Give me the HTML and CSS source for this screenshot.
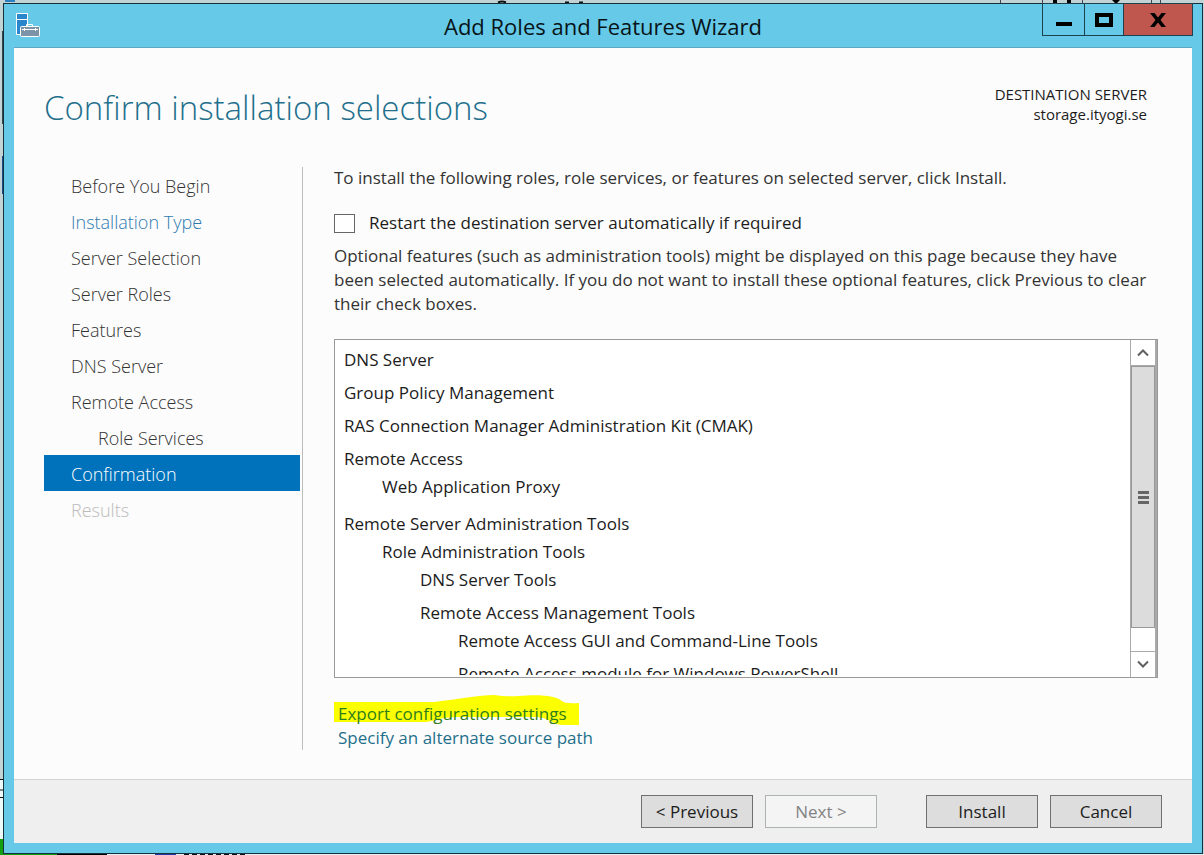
FILE: index.html
```
<!DOCTYPE html>
<html lang="en">
<head>
<meta charset="utf-8">
<title>Add Roles and Features Wizard</title>
<link rel="stylesheet" href="styles.css">
</head>
<body>
<svg class="backdrop" viewBox="0 0 1204 855" preserveAspectRatio="none" aria-hidden="true">
  <rect width="1204" height="855" fill="#c3d3d5"/>
  <rect x="5" width="10" height="2" fill="#2a80c0"/>
  <path d="M498 2.500q4-2 8 0M565 2.500h4M579 2.500h4" stroke="#111" fill="none" stroke-width="2"/>
  <path d="M1000.500 0v3M1042.500 0v3M1082.500 0v3M1151.500 0v3M1160.500 0v3" stroke="#445" />
  <path d="M1053 0h4v3h-4zM1067 0h4v3h-4zM1112 0h8l-3 3h-2z" fill="#000"/>
  <path d="M2.500 31v93" stroke="#33474a"/>
  <path d="M2.500 156v38" stroke="#1a4a8a"/>
  <path d="M0 779h3v61h-3z" fill="#eefafa"/>
  <path d="M0 779.500h3M0 790h3M0 797.500h3" stroke="#111"/>
  <path d="M0 839h3v16h-3zM3 854h54v1h-54z" fill="#12a012"/>
  <path d="M57 854h50v1h-50z" fill="#000"/>
  <path d="M107 854h48v1h-48zM176 854h1028v1h-1028z" fill="#e8eef5"/>
  <path d="M155 854h21v1h-21z" fill="#2438a8"/>
  <path d="M184 854.500h62" stroke="#111" stroke-dasharray="5 3"/>
</svg>
<div class="window">
  <header class="titlebar">
    <svg class="app-icon" width="24" height="25" viewBox="0 0 24 25" aria-hidden="true">
      <path d="M.5.5h11v21H.500z" fill="#2a86cc" stroke="#fff"/>
      <path d="M1 6.500h10" stroke="#fff"/>
      <path d="M10.500 13v-1.500h6V13" fill="none" stroke="#fff"/>
      <rect x="4.500" y="13.500" width="19" height="10" rx="1" fill="#7c93a8" stroke="#fff"/>
      <path d="M6 16.500h16M8.500 15v3M19.500 15v3" stroke="#fff"/>
    </svg>
    <span class="title">Add Roles and Features Wizard</span>
    <div class="caption-buttons">
      <button class="caption minimize" aria-label="Minimize"><svg width="16" height="16" viewBox="0 0 16 16"><path d="M0 10h16v4H0z"/></svg></button>
      <button class="caption maximize" aria-label="Maximize"><svg width="18" height="14" viewBox="0 0 18 14"><path fill-rule="evenodd" d="M0 0h18v14H0zM4 4v6h10V4z"/></svg></button>
      <button class="caption close" aria-label="Close"><svg width="16" height="14" viewBox="0 0 16 14"><path d="M0 0h4.500L8 4.500 11.500 0H16l-5.500 7 5.500 7h-4.500L8 9.500 4.500 14H0l5.500-7z"/></svg></button>
    </div>
  </header>
  <div class="client">
    <div class="heading">
      <h1>Confirm installation selections</h1>
      <div class="destination">DESTINATION SERVER<br>storage.ityogi.se</div>
    </div>
    <div class="content">
      <nav class="steps">
        <a href="#">Before You Begin</a>
        <a href="#" class="hover">Installation Type</a>
        <a href="#">Server Selection</a>
        <a href="#">Server Roles</a>
        <a href="#">Features</a>
        <a href="#">DNS Server</a>
        <a href="#">Remote Access</a>
        <a href="#" class="sub">Role Services</a>
        <a href="#" class="current" aria-current="step">Confirmation</a>
        <a class="disabled">Results</a>
      </nav>
      <main class="page">
        <p class="intro">To install the following roles, role services, or features on selected server, click Install.</p>
        <label class="restart"><input type="checkbox">Restart the destination server automatically if required</label>
        <p class="note">Optional features (such as administration tools) might be displayed on this page because they have been selected automatically. If you do not want to install these optional features, click Previous to clear their check boxes.</p>
        <div class="listbox">
          <div class="viewport">
            <ul>
              <li>DNS Server</li>
              <li>Group Policy Management</li>
              <li>RAS Connection Manager Administration Kit (CMAK)</li>
              <li>Remote Access
                <ul><li>Web Application Proxy</li></ul>
              </li>
              <li>Remote Server Administration Tools
                <ul>
                  <li>Role Administration Tools
                    <ul>
                      <li>DNS Server Tools</li>
                      <li>Remote Access Management Tools
                        <ul>
                          <li>Remote Access GUI and Command-Line Tools</li>
                          <li>Remote Access module for Windows PowerShell</li>
                        </ul>
                      </li>
                    </ul>
                  </li>
                </ul>
              </li>
            </ul>
          </div>
          <div class="scrollbar">
            <button class="arrow up" aria-label="Scroll up"><svg width="12" height="9" viewBox="0 0 12 9"><path d="M1 7.500 6 2.500l5 5"/></svg></button>
            <div class="track"><div class="thumb"><svg width="11" height="13" viewBox="0 0 11 13"><path d="M0 1.500h11M0 6.500h11M0 11.500h11"/></svg></div></div>
            <button class="arrow down" aria-label="Scroll down"><svg width="12" height="9" viewBox="0 0 12 9"><path d="M1 1.500 6 6.500l5-5"/></svg></button>
          </div>
        </div>
        <div class="links">
          <a href="#" class="export"><svg class="marker" width="245" height="31" viewBox="0 0 245 31" aria-hidden="true"><path d="M0 7h100C125 4 145 0 160 0q12 2 25 1c22-2 37 0 43 5q3 3 17 2v22h-17c-12-1-12-8-28-8h-75c-20 0-25 5-35 5H0z" fill="#fbff00"/></svg><span>Export configuration settings</span></a>
          <a href="#">Specify an alternate source path</a>
        </div>
      </main>
    </div>
    <footer class="actions">
      <button>&lt; Previous</button>
      <button disabled>Next &gt;</button>
      <button class="install">Install</button>
      <button>Cancel</button>
    </footer>
  </div>
</div>
</body>
</html>
```
FILE: styles.css
```
* { box-sizing: border-box; }

body {
  margin: 0;
  height: 100vh;
  padding: 3px 1px 1px 3px;
  display: flex;
  font-family: "Open Sans", "Noto Sans", sans-serif;
  font-size: 17px;
  line-height: 24px;
  color: #1c1c1c;
}

button { font: inherit; color: inherit; padding: 0; border-radius: 0; }
p, h1, ul { margin: 0; padding: 0; }
a { text-decoration: none; color: #1f6f8b; }

.backdrop {
  position: fixed;
  inset: 0;
  width: 100%;
  height: 100%;
  z-index: -1;
}

.window {
  flex: 1;
  min-width: 0;
  display: flex;
  flex-direction: column;
  padding: 0 10px 10px;
  background: #66c9e8;
  border: 1px solid #12323e;
}

.titlebar {
  flex: none;
  height: 44px;
  display: grid;
  grid-template-columns: 151px 1fr 151px;
  border-bottom: 1px solid #5fa6c0;
}

.app-icon { margin: 9px 0 0 2px; }

.title {
  text-align: center;
  font-size: 22px;
  line-height: 44px;
  color: #081418;
}

.caption-buttons {
  display: flex;
  height: 33px;
  margin: -1px -1px 0 1px;
  border: 1px solid #1c4250;
}

.caption {
  display: grid;
  place-items: center;
  border: 0;
  border-right: 1px solid #1c4250;
  background: #66c9e8;
}

.minimize { width: 42px; }
.maximize { width: 39px; }
.close { flex: 1; border-right: 0; background: #c0574f; }

.client {
  flex: 1;
  min-height: 0;
  display: flex;
  flex-direction: column;
  background: #fcfcfc;
}

.heading {
  display: flex;
  justify-content: space-between;
  padding: 36px 45px 35px 30px;
}

h1 {
  font-size: 33px;
  font-weight: 300;
  line-height: 48px;
  color: #226f8c;
}

.destination {
  text-align: right;
  font-size: 15px;
  line-height: 20px;
}

.content {
  flex: 1;
  min-height: 0;
  display: grid;
  grid-template-columns: 259px 1fr;
  gap: 31px;
  padding: 0 34px 29px 30px;
}

.steps {
  border-right: 1px solid #bdbdbd;
  padding-right: 2px;
}

.steps a {
  display: block;
  padding-left: 27px;
  font-size: 18px;
  font-weight: 300;
  line-height: 38px;
  height: 36px;
  color: #333;
}

.steps .hover { color: #2d7ab0; }
.steps .sub { padding-left: 54px; }
.steps .current { background: #0072bc; color: #fff; }
.steps .disabled { color: #bbb; }

.page {
  min-height: 0;
  display: flex;
  flex-direction: column;
}

.intro { line-height: 22px; color: #333; }

.restart {
  display: flex;
  align-items: center;
  gap: 14px;
  margin-top: 22px;
}

.restart input {
  appearance: none;
  width: 21px;
  height: 19px;
  margin: 0;
  border: 1px solid #666;
  background: #fff;
}

.note { margin-top: 9px; color: #333; }

.listbox {
  flex: 1;
  min-height: 0;
  display: flex;
  margin-top: 23px;
  border: 1px solid #999;
  background: #fff;
}

.viewport {
  flex: 1;
  overflow: hidden;
  margin: 7px 0 2px 9px;
}

.viewport ul { list-style: none; }
.viewport ul ul { padding: 3px 0 4px 38px; }
.viewport li { line-height: 25px; }
.viewport li + li { margin-top: 8px; }

.scrollbar {
  width: 27px;
  display: flex;
  flex-direction: column;
  border: 1px solid #aaa;
  border-width: 0 2px 0 1px;
}

.arrow {
  display: grid;
  place-items: center;
  height: 26px;
  border: 0;
  background: #fff;
}

.arrow.up { border-bottom: 1px solid #aaa; }
.arrow.down { border-top: 1px solid #aaa; }

.arrow path {
  fill: none;
  stroke: #606060;
  stroke-width: 2;
}

.track { flex: 1; }

.thumb {
  display: grid;
  place-items: center;
  height: 92%;
  border: 1px solid #999;
  background: #dcdcdc;
}

.thumb path { stroke: #666; stroke-width: 3; }

.links {
  display: flex;
  flex-direction: column;
  align-items: flex-start;
  margin-top: 24px;
  padding-left: 4px;
}

.export { position: relative; color: #2f7d1c; }
.export span { position: relative; }

.marker {
  position: absolute;
  left: -4px;
  top: -7px;
}

.actions {
  flex: none;
  display: flex;
  justify-content: flex-end;
  gap: 12px;
  padding: 15px 30px;
  border-top: 1px solid #d2d2d2;
  background: #efefef;
}

.actions button {
  width: 112px;
  height: 33px;
  border: 1px solid #707070;
  background: #dddddd;
}

.actions button:disabled {
  border-color: #adb2b5;
  background: #f4f4f4;
  color: #838383;
}

.actions .install { margin-left: 37px; }
```
